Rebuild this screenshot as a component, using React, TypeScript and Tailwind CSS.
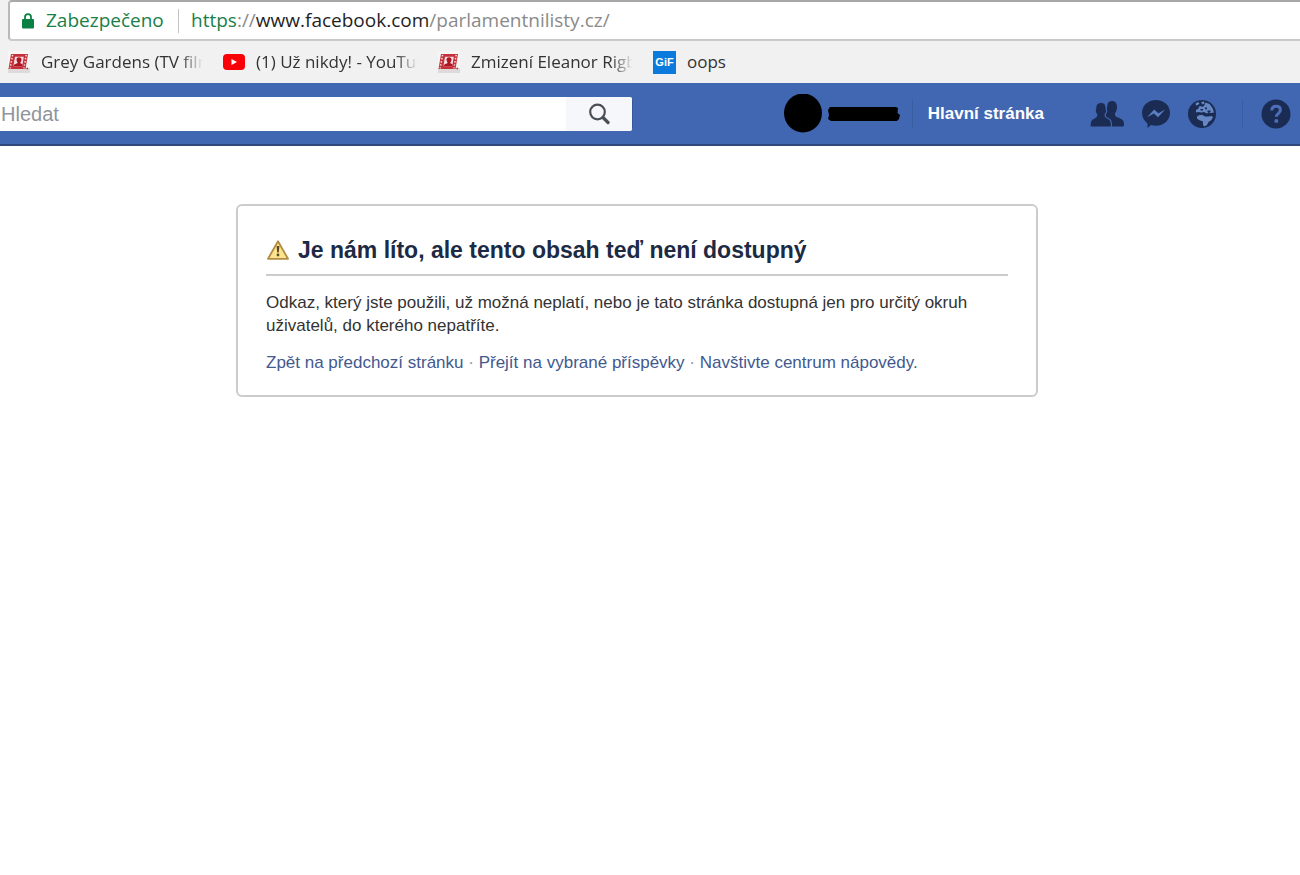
import React from "react";

interface Bookmark {
  label: string;
  icon: React.ReactNode;
  width: string;
  faded?: boolean;
}

function LockIcon() {
  return (
    <svg className="h-4 w-3 shrink-0" viewBox="0 0 12 16" aria-hidden="true">
      <path d="M3 7V4.2a3 3 0 0 1 6 0V7" fill="none" stroke="#0b8043" strokeWidth="1.8" />
      <rect x="0" y="6" width="12" height="9.5" rx="1" fill="#0b8043" />
    </svg>
  );
}

function FilmIcon() {
  return (
    <svg className="h-[22px] w-[22px] shrink-0" viewBox="0 0 22 22" aria-hidden="true">
      <path d="M0 0h22v22H0z" fill="#f8f5f5" />
      <path d="M0 17h22v5H0z" fill="#dedada" />
      <path d="M3 3h17l-2.500 15H.5z" fill="#c4303b" />
      <path d="M7 5.800h8.800l-1.600 9.400H5.400z" fill="#f6dfe0" />
      <path d="M4.600 3.800 2.200 17.400M18.200 3.800l-2.300 13.600" stroke="#f6dfe0" strokeWidth="1.500" strokeDasharray="1.500 1.700" />
      <circle cx="11" cy="8.800" r="2.500" fill="#ad1522" />
      <path d="M5.400 15.200c.6-2.200 1.800-2.400 4-3v-2h3v2c1.800.6 2.400.8 2 3z" fill="#ad1522" />
      <path d="M18.500 17.500H20" stroke="#b3202b" strokeWidth="1.500" />
    </svg>
  );
}

function YoutubeIcon() {
  return (
    <svg className="h-4 w-[22px] shrink-0" viewBox="0 0 22 16" aria-hidden="true">
      <rect width="22" height="16" rx="4" fill="#fb0007" />
      <path d="M8.500 5v6l5.500-3z" fill="#fff" />
    </svg>
  );
}

function GifIcon() {
  return (
    <span className="flex h-[23px] w-[23px] shrink-0 items-center justify-center bg-[#0a7bdc] font-['Liberation_Sans',sans-serif] text-[11px] font-bold text-white">
      GiF
    </span>
  );
}

const BOOKMARKS: Bookmark[] = [
  { label: "Grey Gardens (TV film", icon: <FilmIcon />, width: "w-[162px]", faded: true },
  { label: "(1) Už nikdy! - YouTube", icon: <YoutubeIcon />, width: "w-[162px]", faded: true },
  { label: "Zmizení Eleanor Rigby", icon: <FilmIcon />, width: "w-[162px]", faded: true },
  { label: "oops", icon: <GifIcon />, width: "w-auto" },
];

function AddressBar() {
  return (
    <div className="ml-2 flex h-[41px] items-center rounded-l-sm border-y-2 border-l-2 border-t-[#a8a8a8] border-b-[#c9c9c9] border-l-[#b9b9b9] bg-white pl-3 text-[19px] whitespace-nowrap">
      <LockIcon />
      <span className="ml-3 w-[119px] text-[#188048]">Zabezpečeno</span>
      <span className="mr-3 ml-[13px] h-6 w-px bg-[#c4c4c4]" />
      <span className="text-[#8a8a8a]">
        <span className="text-[#188048]">https</span>://
        <span className="text-[#1f1f1f]">www.facebook.com</span>/parlamentnilisty.cz/
      </span>
    </div>
  );
}

function BookmarksBar() {
  return (
    <nav aria-label="Záložky" className="flex h-[42px] items-center gap-5 pl-2 text-[17px] text-[#333]">
      {BOOKMARKS.map((b) => (
        <a key={b.label} href="#" className="flex items-center gap-[11px]">
          {b.icon}
          <span
            className={`${b.width} overflow-hidden whitespace-nowrap ${
              b.faded ? "[mask-image:linear-gradient(to_right,black_86%,transparent)]" : ""
            }`}
          >
            {b.label}
          </span>
        </a>
      ))}
    </nav>
  );
}

function SearchIcon() {
  return (
    <svg className="h-[22px] w-[22px]" viewBox="0 0 22 22" fill="none" stroke="#4b4f56" aria-hidden="true">
      <circle cx="9.500" cy="9" r="7.300" strokeWidth="2.200" />
      <path d="m15 14.500 5 5" strokeWidth="3.200" strokeLinecap="round" />
    </svg>
  );
}

function FriendsIcon() {
  return (
    <svg className="h-7 w-[34px]" viewBox="0 0 34 28" fill="#1a2c54" aria-hidden="true">
      <path d="M22 1c3.400 0 5 2.300 5 6 0 3-.8 4.800-2 6.300 0 2.600.4 3.200 3 4.300 4 1.600 6 2.400 6 7.400 0 1-.4 1.500-1.500 1.500H20L15 14l2-4c0-6 1-9 5-9z" />
      <path
        d="M11 2.500c4 0 5.200 2.500 5.200 6 0 1.500.8 2 .3 3.600-.3 1-.9 1-1.200 2-.6 1.800 0 3 2 3.900 3 1.200 4.200 2.500 4.200 7.500 0 1-.5 1.500-1.500 1.500H1.500C.5 27 0 26.500 0 25.500 0 20.500 1.500 19.200 4.500 18c2-.9 2.600-2.100 2-3.900-.3-1-.9-1-1.200-2-.5-1.600.3-2.100.3-3.600 0-3.500 1.400-6 5.400-6z"
        stroke="#4267b2"
        strokeWidth="1.200"
      />
    </svg>
  );
}

function MessengerIcon() {
  return (
    <svg className="h-[30px] w-[30px]" viewBox="0 0 30 30" aria-hidden="true">
      <path d="M15 1c8 0 14 5.500 14 12.800s-6 12.900-14 12.900c-1.800 0-3.500-.3-5-.8L6.500 29v-4.600C3 22 1 18 1 13.800 1 6.500 7 1 15 1z" fill="#1a2c54" />
      <path d="m6 18.200 7.200-7.700 4.200 3.800 6.800-3.800-7.200 7.700-4.200-3.800z" fill="#5a7cc0" />
    </svg>
  );
}

function GlobeIcon() {
  return (
    <svg className="h-7 w-7" viewBox="0 0 28 28" aria-hidden="true">
      <circle cx="14" cy="14" r="14" fill="#1a2c54" />
      <path d="M7.500 3.500 10 2l1.500 1.300L10 5l-2 .500zM13 2l3-.500.500 2-2 1zM17.500 2.500l4 1.500 3 4 1.500 4.500-3 .500-2.500-1-1.500 1.500-3-1.500-2.500.500L10 12l-2 .500V10l2.500-1.500.5-2L13 6l1 1 2-1z" fill="#6686c4" />
      <path d="M9 16.500 11.500 15l3 0 2.500 1.500h3.500l3-.500 1.500 1-1.500 3-3 2-1.500 3-2.500 1.500-1.500-1.500v-3.500L11 20l-2-1.500z" fill="#6686c4" />
      <path d="M12.500 9h2.500v1.500h-2.500zM17 7.500h2v1.700h-2zM19.500 10.500h3V12h-3z" fill="#1a2c54" />
    </svg>
  );
}

function HelpIcon() {
  return (
    <svg className="h-[30px] w-[30px]" viewBox="0 0 30 30" aria-hidden="true">
      <circle cx="15" cy="15" r="14.500" fill="#1a2c54" />
      <path d="M10.800 11.500c0-2.700 1.700-4.200 4.300-4.200s4.300 1.400 4.300 3.800c0 3.200-4 3.200-4 6.700" fill="none" stroke="#4c6fb8" strokeWidth="3" />
      <circle cx="15.300" cy="22" r="2" fill="#4c6fb8" />
    </svg>
  );
}

function SiteHeader() {
  return (
    <header className="flex h-[63px] items-center border-b-2 border-[#2f477a] bg-[#4267b2] font-['Liberation_Sans',Arial,sans-serif]">
      <form className="flex h-[34px] w-[633px] shrink-0 overflow-hidden rounded-r-[3px] border-r border-[#365899] bg-white">
        <input
          type="text"
          aria-label="Hledat"
          placeholder="Hledat"
          className="min-w-0 flex-1 bg-white pl-px text-xl text-[#1d2129] outline-none placeholder:text-[#90949c]"
        />
        <button type="button" aria-label="Vyhledat" className="flex w-[66px] items-center justify-center bg-[#f5f7fa]">
          <SearchIcon />
        </button>
      </form>
      <div className="ml-auto flex shrink-0 items-center pr-[9px]">
        <a href="#" aria-label="Profil" className="flex items-center gap-[6px]">
          <svg className="h-10 w-[38px]" viewBox="0 0 38 40" aria-hidden="true">
            <ellipse cx="19" cy="19" rx="19" ry="19.500" />
          </svg>
          <svg className="h-4 w-[72px]" viewBox="0 0 72 16" aria-hidden="true">
            <path d="M2 1h66l2 1-.5 5L72 9l-1 4-2 2H3l-3-2 1-4-1-5z" />
          </svg>
        </a>
        <span className="mx-3 h-7 w-px bg-[#3a5ca0]" />
        <a href="#" className="mr-[46px] ml-[3px] text-[17px] font-bold text-white">
          Hlavní stránka
        </a>
        <div className="flex items-center gap-[17px]">
          <button type="button" aria-label="Žádosti o přátelství"><FriendsIcon /></button>
          <button type="button" aria-label="Zprávy"><MessengerIcon /></button>
          <button type="button" aria-label="Upozornění"><GlobeIcon /></button>
        </div>
        <span className="mr-[18px] ml-[26px] h-7 w-px bg-[#3a5ca0]" />
        <button type="button" aria-label="Nápověda"><HelpIcon /></button>
      </div>
    </header>
  );
}

function WarningIcon() {
  return (
    <svg className="h-5 w-[22px] shrink-0" viewBox="0 0 22 20" aria-hidden="true">
      <path d="M11 1.200 21 18.800H1z" fill="#fbe48d" stroke="#b58a45" strokeWidth="1.800" strokeLinejoin="round" />
      <path d="M9.600 6h2.800l-.6 6.500h-1.600z" fill="#5c4a20" />
      <circle cx="11" cy="15" r="1.400" fill="#5c4a20" />
    </svg>
  );
}

function UnavailableCard() {
  return (
    <section className="w-[802px] max-w-full rounded-md border-2 border-[#cbcccd] px-7 pt-7 pb-[21px]">
      <div className="flex items-center gap-[9px] border-b-2 border-[#cbcccd] pb-2 pl-px">
        <WarningIcon />
        <h1 className="text-[23px] leading-8 font-bold text-[#1d2a44]">Je nám líto, ale tento obsah teď není dostupný</h1>
      </div>
      <p className="mt-[15px] text-[17px] leading-[23px] text-[#333]">
        Odkaz, který jste použili, už možná neplatí, nebo je tato stránka dostupná jen pro určitý okruh uživatelů, do
        kterého nepatříte.
      </p>
      <p className="mt-[14px] text-[17px] leading-[23px] text-[#8d949e]">
        <a href="#" className="text-[#42598f]">Zpět na předchozí stránku</a> ·{" "}
        <a href="#" className="text-[#42598f]">Přejít na vybrané příspěvky</a> ·{" "}
        <a href="#" className="text-[#42598f]">Navštivte centrum nápovědy.</a>
      </p>
    </section>
  );
}

export default function App() {
  return (
    <div className="min-h-screen overflow-x-hidden bg-white">
      <div className="bg-[#f1f1f1] font-['Open_Sans','Noto_Sans',sans-serif]">
        <AddressBar />
        <BookmarksBar />
      </div>
      <SiteHeader />
      <main className="flex justify-center pt-[58px] pr-[26px] font-['Liberation_Sans',Arial,sans-serif]">
        <UnavailableCard />
      </main>
    </div>
  );
}
